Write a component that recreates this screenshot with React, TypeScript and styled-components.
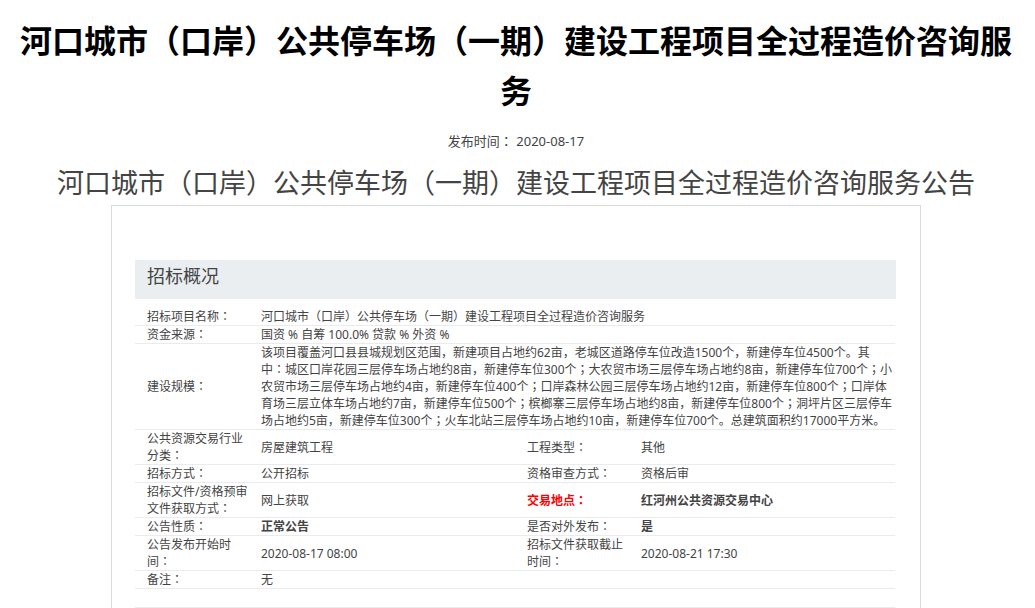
import React, { Fragment } from "react";
import styled, { createGlobalStyle } from "styled-components";

const GlobalStyle = createGlobalStyle`
  body {
    margin: 0;
    background: #fff;
    color: #444;
    font: 12px/17px "Noto Sans", "Noto Sans CJK SC", sans-serif;
    text-spacing-trim: space-all;
    overflow-x: hidden;
  }
`;

const Page = styled.main`
  padding: 16px 13px 0 10px;
`;

const Title = styled.h1`
  margin: 0;
  color: #000;
  font-size: 32px;
  line-height: 50px;
  font-weight: 700;
  text-align: center;
`;

const Published = styled.p`
  margin: 13px 0 10px;
  font-size: 13px;
  line-height: 24px;
  text-align: center;
`;

const Subtitle = styled.h2`
  margin: 0 0 2px;
  font-size: 27px;
  line-height: 40px;
  font-weight: 400;
  text-align: center;
`;

const Card = styled.section`
  box-sizing: border-box;
  max-width: 810px;
  margin: 0 auto;
  padding: 54px 24px 0 23px;
  border: 1px solid #d9dbde;
`;

const SectionTitle = styled.h3`
  margin: 0 0 9px;
  padding: 3px 12px 10px;
  background: #eaeef1;
  font-size: 18px;
  line-height: 26px;
  font-weight: 400;
`;

const InfoTable = styled.table`
  width: calc(100% - 1px);
  border-collapse: separate;
  border-spacing: 0;
  table-layout: fixed;
`;

const LabelCol = styled.col`
  width: 15%;
`;

const ValueCol = styled.col`
  width: 35%;
`;

const Label = styled.th<{ $alert?: boolean }>`
  padding: 0 0 0 12px;
  border-bottom: 1px solid #e9ebee;
  color: ${(p) => (p.$alert ? "#f00" : "inherit")};
  font-weight: ${(p) => (p.$alert ? 700 : 400)};
  text-align: left;
  vertical-align: middle;
`;

const Value = styled.td<{ $strong?: boolean }>`
  padding: 0 2px 0 12px;
  border-bottom: 1px solid #e9ebee;
  font-weight: ${(p) => (p.$strong ? 700 : 400)};
  vertical-align: middle;
`;

const BlankCell = styled.td`
  height: 18px;
  padding: 0;
  border-bottom: 1px solid #e9ebee;
`;

/* Colons and semicolons sit in the middle of their cell in this face. */
const Centered = styled.span`
  font-family: "Noto Sans", "Noto Sans CJK JP", sans-serif;
`;

function Text({ children }: { children: string }) {
  return (
    <>
      {children.split(/([：；])/).map((part, i) =>
        part === "：" || part === "；" ? (
          <Centered key={i} lang="ja">
            {part}
          </Centered>
        ) : (
          <Fragment key={i}>{part}</Fragment>
        )
      )}
    </>
  );
}

type Item = { label: string; value: string; alert?: boolean; strong?: boolean };

const rows: Item[][] = [
  [{ label: "招标项目名称：", value: "河口城市（口岸）公共停车场（一期）建设工程项目全过程造价咨询服务" }],
  [{ label: "资金来源：", value: "国资 % 自筹 100.0% 贷款 % 外资 %" }],
  [
    {
      label: "建设规模：",
      value:
        "该项目覆盖河口县县城规划区范围，新建项目占地约62亩，老城区道路停车位改造1500个，新建停车位4500个。其中：城区口岸花园三层停车场占地约8亩，新建停车位300个；大农贸市场三层停车场占地约8亩，新建停车位700个；小农贸市场三层停车场占地约4亩，新建停车位400个；口岸森林公园三层停车场占地约12亩，新建停车位800个；口岸体育场三层立体车场占地约7亩，新建停车位500个；槟榔寨三层停车场占地约8亩，新建停车位800个；洞坪片区三层停车场占地约5亩，新建停车位300个；火车北站三层停车场占地约10亩，新建停车位700个。总建筑面积约17000平方米。",
    },
  ],
  [
    { label: "公共资源交易行业分类：", value: "房屋建筑工程" },
    { label: "工程类型：", value: "其他" },
  ],
  [
    { label: "招标方式：", value: "公开招标" },
    { label: "资格审查方式：", value: "资格后审" },
  ],
  [
    { label: "招标文件/资格预审文件获取方式：", value: "网上获取" },
    { label: "交易地点：", value: "红河州公共资源交易中心", alert: true, strong: true },
  ],
  [
    { label: "公告性质：", value: "正常公告", strong: true },
    { label: "是否对外发布：", value: "是", strong: true },
  ],
  [
    { label: "公告发布开始时间：", value: "2020-08-17 08:00" },
    { label: "招标文件获取截止时间：", value: "2020-08-21 17:30" },
  ],
  [{ label: "备注：", value: "无" }],
];

export default function App() {
  return (
    <>
      <GlobalStyle />
      <Page lang="zh-CN">
        <Title>河口城市（口岸）公共停车场（一期）建设工程项目全过程造价咨询服务</Title>
        <Published>
          <Text>发布时间：</Text> <time dateTime="2020-08-17">2020-08-17</time>
        </Published>
        <Subtitle>河口城市（口岸）公共停车场（一期）建设工程项目全过程造价咨询服务公告</Subtitle>
        <Card>
          <SectionTitle>招标概况</SectionTitle>
          <InfoTable>
            <colgroup>
              <LabelCol />
              <ValueCol />
              <LabelCol />
              <ValueCol />
            </colgroup>
            <tbody>
              {rows.map((items) => (
                <tr key={items[0].label}>
                  {items.map((item) => (
                    <Fragment key={item.label}>
                      <Label scope="row" $alert={item.alert}>
                        <Text>{item.label}</Text>
                      </Label>
                      <Value colSpan={items.length === 1 ? 3 : 1} $strong={item.strong}>
                        <Text>{item.value}</Text>
                      </Value>
                    </Fragment>
                  ))}
                </tr>
              ))}
              <tr>
                <BlankCell colSpan={4} />
              </tr>
            </tbody>
          </InfoTable>
        </Card>
      </Page>
    </>
  );
}
